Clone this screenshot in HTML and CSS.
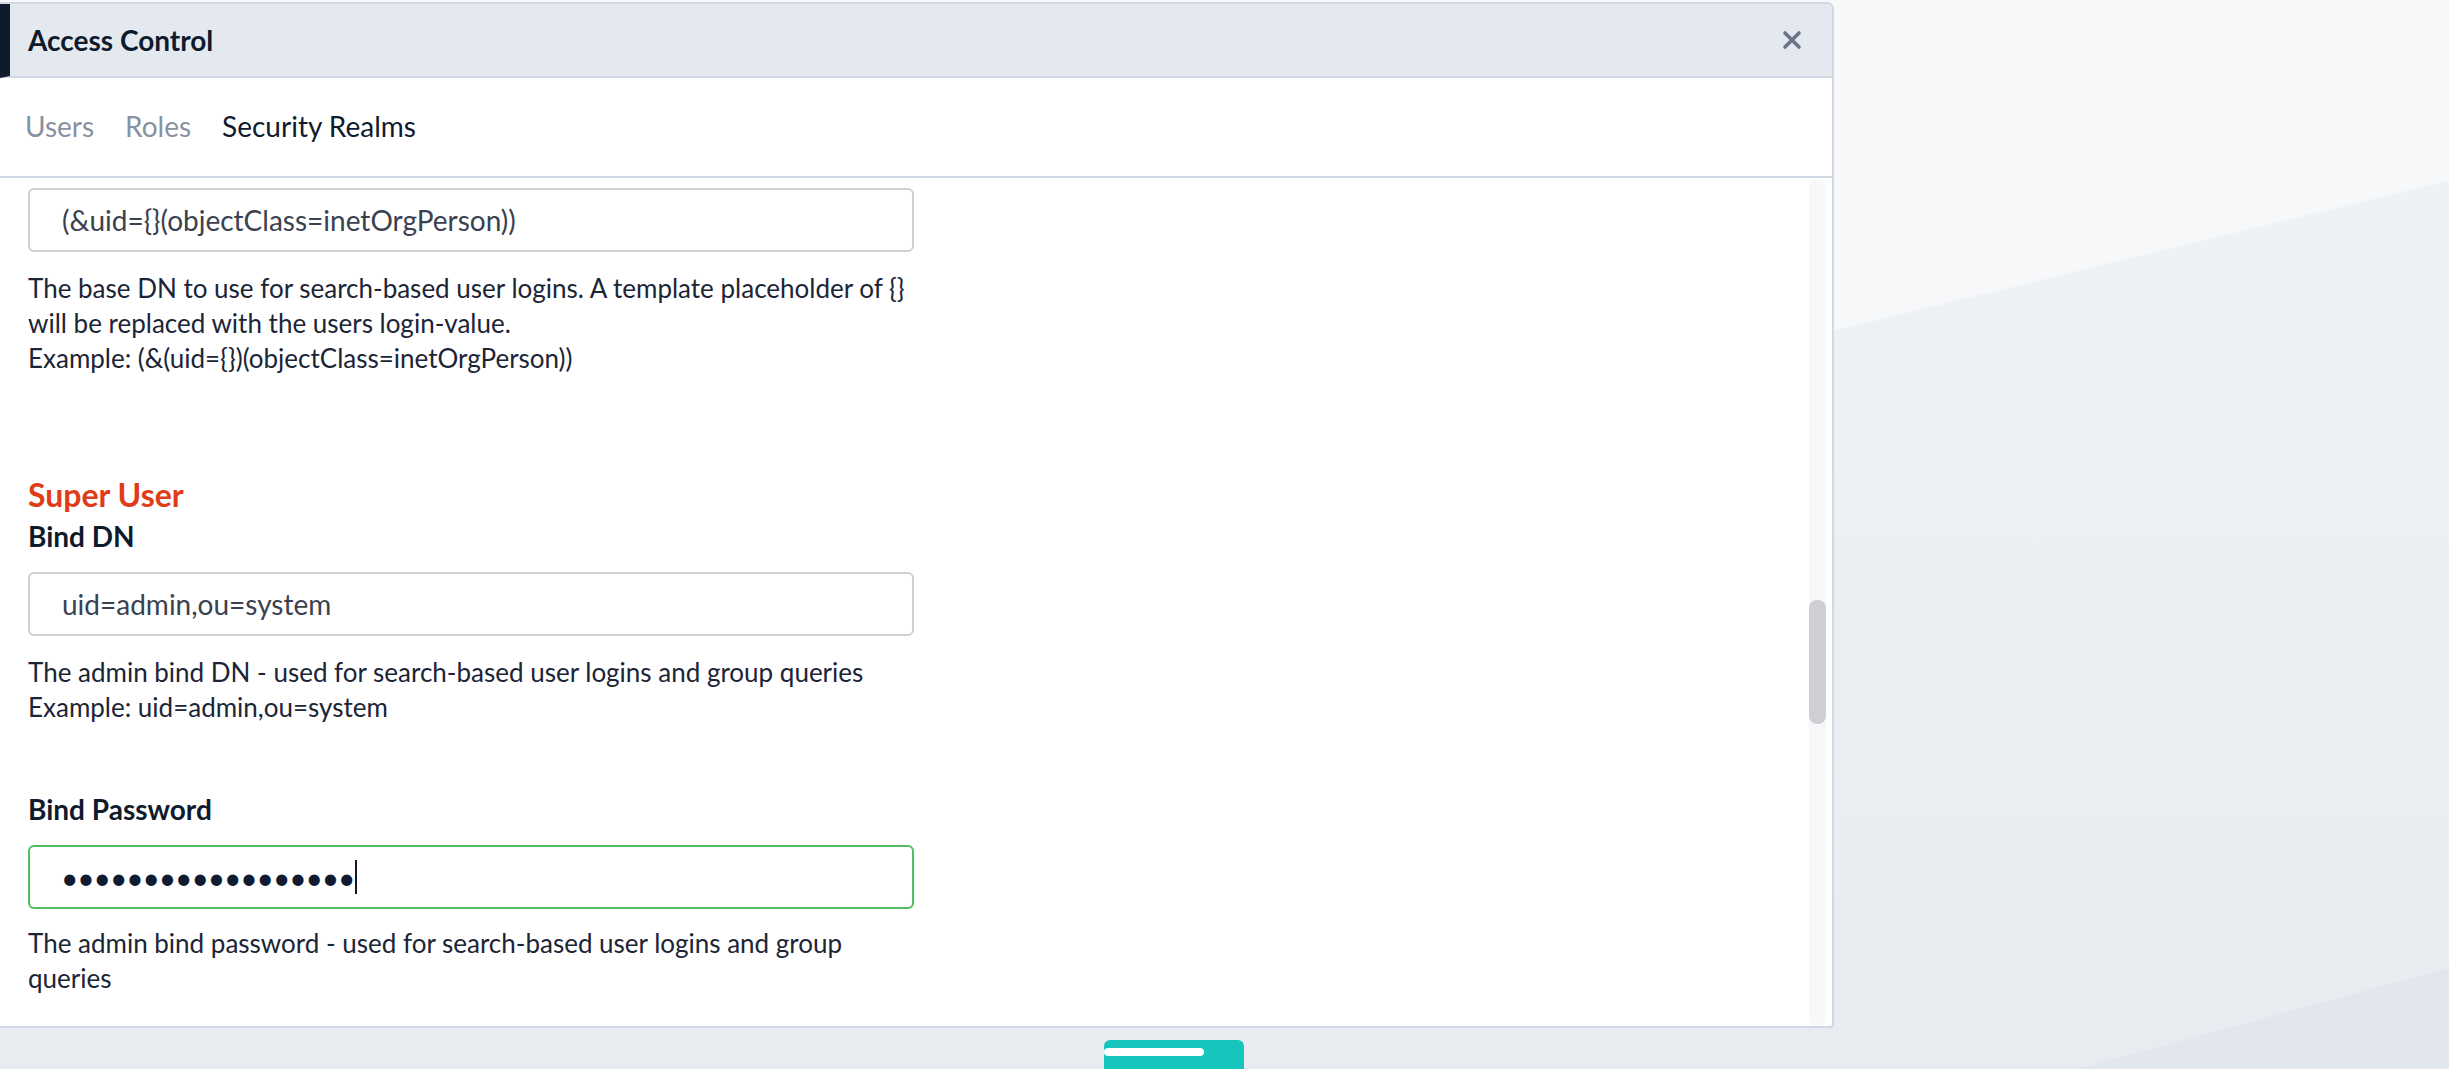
FILE: index.html
```html
<!DOCTYPE html>
<html lang="en">
<head>
<meta charset="utf-8">
<title>Access Control</title>
<link rel="stylesheet" href="styles.css">
</head>
<body>
<svg class="backdrop" viewBox="0 0 2449 1069" preserveAspectRatio="none" aria-hidden="true">
  <defs>
    <linearGradient id="band" x1="0" y1="0" x2="0" y2="1">
      <stop offset="0" stop-color="#eff2f5"/>
      <stop offset="1" stop-color="#e8ecf0"/>
    </linearGradient>
  </defs>
  <rect x="0" y="0" width="2449" height="1069" fill="#f7f8fa"/>
  <polygon points="0,778 2449,180 2449,1069 0,1069" fill="url(#band)"/>
  <polyline points="1834,330 2449,180" fill="none" stroke="#f4f6f8" stroke-width="2"/>
  <polygon points="2077,1069 2449,968 2449,1069" fill="#e2e6ee"/>
</svg>

<div class="panel">
  <header class="panel-header">
    <h1 class="panel-title">Access Control</h1>
    <button class="close" type="button" aria-label="Close">
      <svg viewBox="0 0 20 20" width="20" height="20"><path d="M3 3 L17 17 M17 3 L3 17" stroke="#6e7487" stroke-width="3.6" stroke-linecap="round"/></svg>
    </button>
  </header>

  <nav class="tabs">
    <a class="tab">Users</a>
    <a class="tab">Roles</a>
    <a class="tab active">Security Realms</a>
  </nav>

  <div class="panel-body">
    <div class="content">
      <div class="field">
        <div class="input">(&amp;uid={}(objectClass=inetOrgPerson))</div>
        <p class="help">The base DN to use for search-based user logins. A template placeholder of {} will be replaced with the users login-value.<br>Example: (&amp;(uid={})(objectClass=inetOrgPerson))</p>
      </div>

      <h2 class="section-title">Super User</h2>

      <div class="field">
        <label class="label">Bind DN</label>
        <div class="input">uid=admin,ou=system</div>
        <p class="help">The admin bind DN - used for search-based user logins and group queries<br>Example: uid=admin,ou=system</p>
      </div>

      <div class="field field-pw">
        <label class="label">Bind Password</label>
        <div class="input input-focus"><span class="dots">••••••••••••••••••</span><span class="caret"></span></div>
        <p class="help">The admin bind password - used for search-based user logins and group queries</p>
      </div>
    </div>
    <div class="scrollbar"><div class="thumb"></div></div>
  </div>
</div>

<div class="dock">
  <div class="handle"><span class="handle-bar"></span></div>
</div>
</body>
</html>
```

FILE: styles.css
```css
* { box-sizing: border-box; }

html, body {
  margin: 0;
  padding: 0;
  height: 1069px;
  overflow: hidden;
}

body {
  font-family: Lato, "Open Sans", "Liberation Sans", sans-serif;
  color: #1b2536;
  background: #f7f8fa;
  position: relative;
}

.backdrop {
  position: absolute;
  left: 0;
  top: 0;
  width: 2449px;
  height: 1069px;
  z-index: 0;
}

.panel {
  position: relative;
  z-index: 1;
  margin-top: 2px;
  width: 1834px;
  height: 1026px;
  background: #ffffff;
  border: 2px solid #cfd8e3;
  border-left: none;
  border-radius: 0 7px 4px 0;
  display: flex;
  flex-direction: column;
  overflow: hidden;
}

.panel-header {
  height: 74px;
  flex: none;
  background: #e4e9f0;
  border-left: 10px solid #0f1b2d;
  border-bottom: 2px solid #cfd8e3;
  display: flex;
  align-items: center;
  justify-content: space-between;
  padding: 0 30px 0 18px;
}

.panel-title {
  margin: 0;
  font-size: 28px;
  font-weight: 700;
  color: #0f1b2d;
}

.close {
  border: none;
  background: transparent;
  padding: 0;
  width: 20px;
  height: 20px;
  display: flex;
  cursor: pointer;
}

.tabs {
  height: 100px;
  flex: none;
  display: flex;
  align-items: center;
  gap: 31px;
  padding: 0 0 2px 25px;
  border-bottom: 2px solid #cfd8e3;
}

.tab {
  font-size: 28px;
  color: #8891a1;
  cursor: pointer;
}

.tab.active {
  color: #0f1b2d;
}

.panel-body {
  flex: 1;
  display: flex;
  min-height: 0;
}

.content {
  flex: 1;
  padding: 10px 0 0 28px;
}

.field {
  width: 886px;
}

.input {
  height: 64px;
  border: 2px solid #cdd1d6;
  border-radius: 6px;
  padding: 0 0 0 32px;
  display: flex;
  align-items: center;
  font-size: 28px;
  color: #3a4150;
}

.input-focus {
  border-color: #52bc62;
}

.dots {
  font-size: 30px;
  letter-spacing: -1.1px;
  color: #0f1b33;
  line-height: 1;
  margin-left: -1px;
}

.caret {
  display: inline-block;
  width: 2px;
  height: 34px;
  background: #0f1b2d;
  margin-left: 1px;
}

.help {
  margin: 19px 0 0;
  font-size: 26px;
  line-height: 35px;
  color: #1b2536;
}

.section-title {
  margin: 100px 0 4px;
  font-size: 32px;
  line-height: 38px;
  font-weight: 700;
  color: #e03c17;
}

.label {
  display: block;
  margin: 0 0 18px;
  font-size: 28px;
  line-height: 36px;
  font-weight: 700;
  color: #0f1b2d;
}

.field-pw {
  margin-top: 66px;
}

.field-pw .help {
  margin-top: 17px;
}

.scrollbar {
  flex: none;
  width: 17px;
  margin: 1px 6px 0 0;
  background: #f7f8f9;
  border-radius: 8px;
  padding-top: 421px;
}

.thumb {
  height: 124px;
  width: 17px;
  background: #cdcfd2;
  border-radius: 8px;
}

.dock {
  position: relative;
  z-index: 1;
  display: flex;
  padding: 12px 0 0 1104px;
}

.handle {
  width: 140px;
  height: 30px;
  background: #16c6bc;
  border-radius: 6px 6px 0 0;
  padding-top: 8px;
}

.handle-bar {
  display: block;
  width: 100px;
  height: 8px;
  background: #ffffff;
  border-radius: 4px;
}
```
